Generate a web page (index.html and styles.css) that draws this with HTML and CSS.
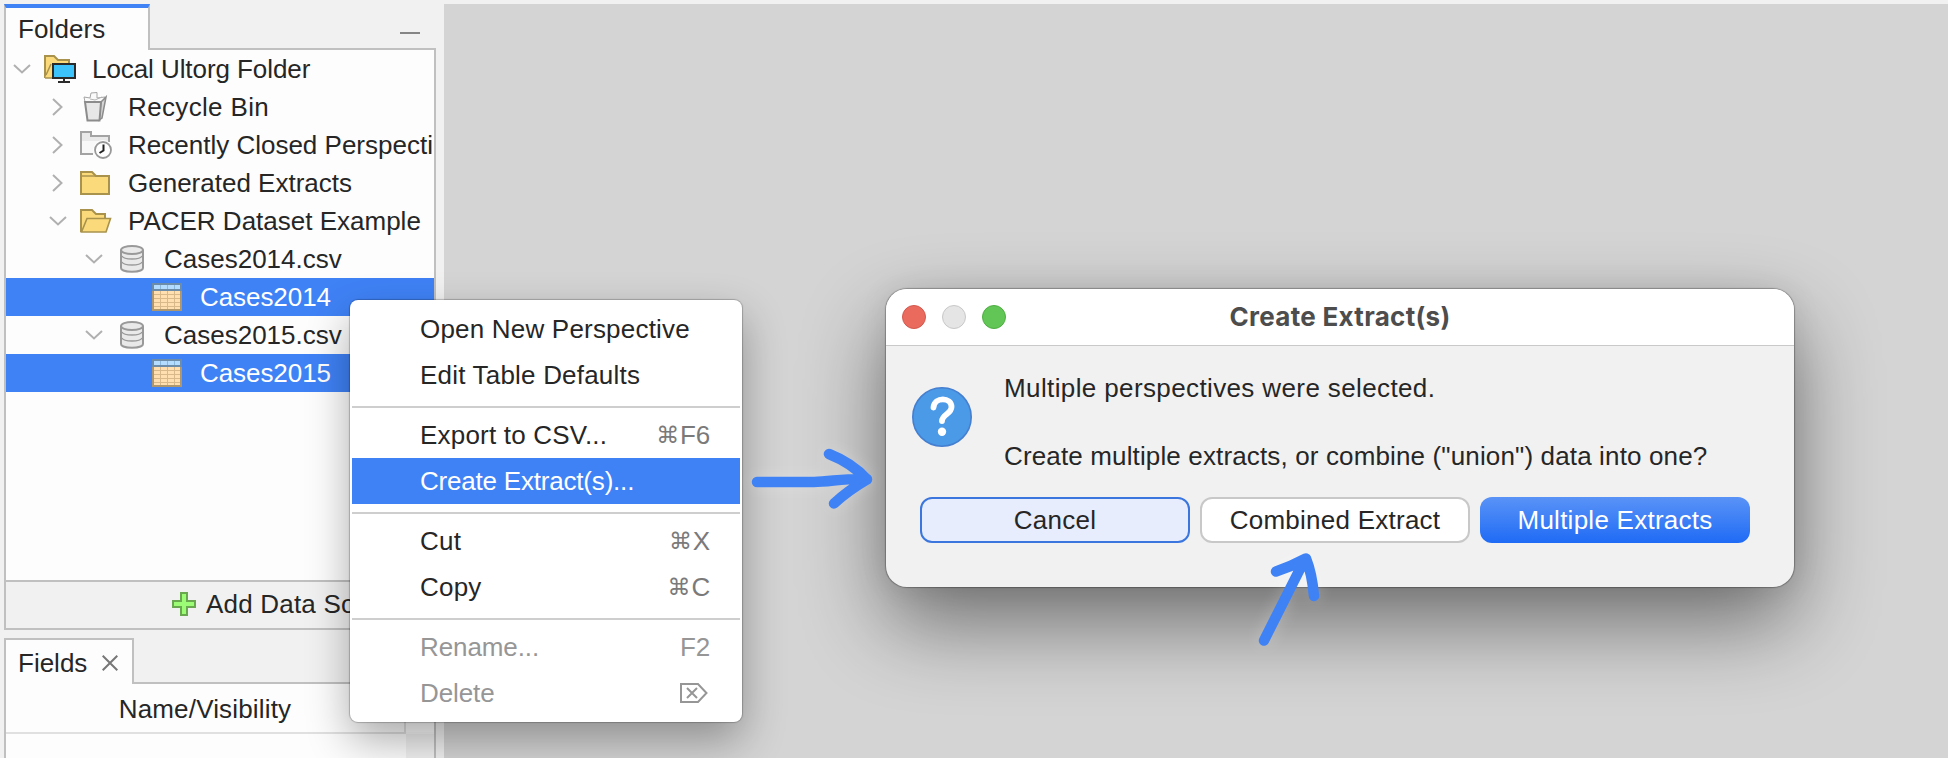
FILE: index.html
```html
<!DOCTYPE html>
<html lang="en">
<head>
<meta charset="utf-8">
<title>Create Extract(s)</title>
<link rel="stylesheet" href="styles.css">
</head>
<body>
<svg width="0" height="0" class="defs">
  <symbol id="down" viewBox="0 0 18 12"><path d="M1 2l8 7.500 8-7.500" fill="none" stroke="#b0b0b0" stroke-width="2"/></symbol>
  <symbol id="right" viewBox="0 0 12 18"><path d="M1 1l8.500 8-8.500 8" fill="none" stroke="#b0b0b0" stroke-width="2"/></symbol>
  <symbol id="db" viewBox="0 0 24 28">
    <path d="M1 5v18c0 5 22 5 22 0V5" fill="#e9e9e9" stroke="#999" stroke-width="2"/>
    <ellipse cx="12" cy="5" rx="11" ry="4" fill="#e9e9e9" stroke="#999" stroke-width="2"/>
    <path d="M2 11c2 4 18 4 20 0M2 17c2 4 18 4 20 0" fill="none" stroke="#999" stroke-width="1.300"/>
  </symbol>
  <symbol id="table" viewBox="0 0 30 28">
    <rect x="1" y="1" width="28" height="26" fill="#ffdfb0" stroke="#ae976f" stroke-width="2"/>
    <rect x="1" y="1" width="28" height="6" fill="#b3dcff" stroke="#6d8ca8" stroke-width="2"/>
    <path d="M8.500 8v18M15.500 8v18M22.500 8v18M2 11.500h26M2 15.500h26M2 19.500h26M2 23.500h26" stroke="#d9b98a" stroke-width="1" fill="none"/>
    <path d="M8.500 2v4M15.500 2v4M22.500 2v4" stroke="#8bb8de" stroke-width="1"/>
  </symbol>
</svg>
<div class="app">
  <aside class="side">
    <section class="panel folders">
      <header class="tabs">
        <div class="tab active">Folders</div>
        <div class="rest"><span class="minimize"></span></div>
      </header>
      <div class="tree">
        <div class="row l0"><svg class="tw" width="18" height="12"><use href="#down"/></svg>
          <span class="ic"><svg width="32" height="28" viewBox="0 0 32 28"><path d="M1 23V1h9l4 4h11v3" fill="#fbda7c" stroke="#a8924c" stroke-width="2"/><path d="M1 23h7V6z" fill="#fbda7c"/><path d="M1 23h7M2 20L7 9" stroke="#a8924c" stroke-width="1.500" fill="none"/><rect x="9" y="9" width="22" height="14" fill="#3cc3fb" stroke="#2b2b2b" stroke-width="2"/><path d="M14 27h12M20 24v3" stroke="#2b2b2b" stroke-width="2"/></svg></span>
          <span class="t tight">Local Ultorg Folder</span></div>
        <div class="row l1"><svg class="tw" width="12" height="18"><use href="#right"/></svg>
          <span class="ic"><svg width="32" height="30" viewBox="0 0 32 30"><path d="M5 10L4 5l6 1 1-5 6-.5v5.500l8-1v5z" fill="#fafafa" stroke="#a5a5a5"/><path d="M10 7l5 1 7-3" fill="none" stroke="#b5b5b5"/><path d="M21 10l5-5-4 21-3 2z" fill="#d5d5d5" stroke="#8c8c8c" stroke-width="1.500"/><path d="M5 10h16l-1.500 18.500h-12z" fill="#e7e7e7" stroke="#8c8c8c" stroke-width="2"/></svg></span>
          <span class="t wide">Recycle Bin</span></div>
        <div class="row l1"><svg class="tw" width="12" height="18"><use href="#right"/></svg>
          <span class="ic"><svg width="32" height="28" viewBox="0 0 32 28"><path d="M1 23V1h10v4h18v18z" fill="#f8f8f8"/><path d="M1 10V1h10v4h18v5z" fill="#e9e9e9"/><path d="M13 23H1V1h10v4h18v6" fill="none" stroke="#a3a3a3" stroke-width="2"/><circle cx="23" cy="19" r="10" fill="#fdfdfd"/><circle cx="23" cy="19" r="8" fill="#fff" stroke="#999" stroke-width="1.800"/><path d="M23.500 13.500v6l-4 2.500" fill="none" stroke="#222" stroke-width="2"/></svg></span>
          <span class="t">Recently Closed Perspecti</span></div>
        <div class="row l1"><svg class="tw" width="12" height="18"><use href="#right"/></svg>
          <span class="ic"><svg width="32" height="26" viewBox="0 0 32 26"><path d="M1 24V2h11l4 4h13v18z" fill="#fbda7c" stroke="#a8924c" stroke-width="2"/><path d="M2 6h14" stroke="#a8924c" stroke-width="1.500"/></svg></span>
          <span class="t">Generated Extracts</span></div>
        <div class="row l1"><svg class="tw" width="18" height="12"><use href="#down"/></svg>
          <span class="ic"><svg width="32" height="26" viewBox="0 0 32 26"><path d="M1 24V2h11l4 4h9v5" fill="#fbda7c" stroke="#a8924c" stroke-width="2"/><path d="M1.500 24L7 10.500h23.500l-4.500 13.500z" fill="#fbda7c" stroke="#a8924c" stroke-width="1.600"/></svg></span>
          <span class="t">PACER Dataset Example</span></div>
        <div class="row l2"><svg class="tw" width="18" height="12"><use href="#down"/></svg>
          <span class="ic"><svg width="24" height="28"><use href="#db"/></svg></span>
          <span class="t">Cases2014.csv</span></div>
        <div class="row l3 sel"><span class="ic"><svg width="30" height="28"><use href="#table"/></svg></span>
          <span class="t tight">Cases2014</span></div>
        <div class="row l2"><svg class="tw" width="18" height="12"><use href="#down"/></svg>
          <span class="ic"><svg width="24" height="28"><use href="#db"/></svg></span>
          <span class="t">Cases2015.csv</span></div>
        <div class="row l3 sel"><span class="ic"><svg width="30" height="28"><use href="#table"/></svg></span>
          <span class="t tight">Cases2015</span></div>
      </div>
      <div class="add"><svg width="24" height="24" viewBox="0 0 24 24"><path d="M9 1h6v8h8v6h-8v8H9v-8H1V9h8z" fill="#9dfc76" stroke="#6aa84f" stroke-width="2"/></svg><span>Add Data Source</span></div>
    </section>
    <section class="panel fields">
      <header class="tabs">
        <div class="tab">Fields<svg width="16" height="16" viewBox="0 0 16 16"><path d="M.7.7l14.600 14.600M15.300.7L.7 15.300" stroke="#777" stroke-width="2"/></svg></div>
        <div class="rest"></div>
      </header>
      <div class="grid"><div class="col">Name/Visibility</div><div class="corner"></div><div class="cells"></div><div class="gutter"></div></div>
    </section>
  </aside>
  <main class="desk"></main>
</div>

<div class="menu">
  <div class="item">Open New Perspective</div>
  <div class="item">Edit Table Defaults</div>
  <hr>
  <div class="item">Export to CSV...<kbd><i>⌘</i>F6</kbd></div>
  <div class="item on">Create Extract(s)...</div>
  <hr>
  <div class="item">Cut<kbd><i>⌘</i>X</kbd></div>
  <div class="item">Copy<kbd><i>⌘</i>C</kbd></div>
  <hr>
  <div class="item off">Rename...<kbd>F2</kbd></div>
  <div class="item off">Delete<kbd><svg class="del" width="28" height="20" viewBox="0 0 28 20"><path d="M1 1h17l8.500 9-8.500 9H1zM7 5l10 10M17 5L7 15" fill="none" stroke="#969696" stroke-width="2"/></svg></kbd></div>
</div>

<div class="dialog">
  <div class="title"><span class="lights"><b class="red"></b><b class="grey"></b><b class="green"></b></span>Create Extract(s)</div>
  <div class="body">
    <svg width="60" height="60" viewBox="0 0 60 60"><circle cx="30" cy="30" r="29.200" fill="#4a9ae8" stroke="#457fd0" stroke-width="1.600"/><path d="M21.500 20.500C22.500 9.500 39.500 10 39.500 20c0 7-9.500 7.500-9.500 14" fill="none" stroke="#fff" stroke-width="5.800" stroke-linecap="round"/><circle cx="30" cy="44.800" r="4.200" fill="#fff"/></svg>
    <div class="msg"><p>Multiple perspectives were selected.</p><p class="ask">Create multiple extracts, or combine ("union") data into one?</p></div>
  </div>
  <div class="buttons"><button class="cancel">Cancel</button><button>Combined Extract</button><button class="primary">Multiple Extracts</button></div>
</div>

<svg class="arrow a1" width="130" height="70" viewBox="745 440 130 70"><path d="M757 482h57C830 482 844 478 867 479M829 454q23 9 38 25.500q-19 11-33 24"/></svg>
<svg class="arrow a2" width="70" height="100" viewBox="1255 550 70 100"><path d="M1264 640.500L1305 559M1276 571.500q15-5 30-13q6 15 8 37.500"/></svg>
</body>
</html>
```
FILE: styles.css
```css
* { box-sizing: border-box; }
body {
  margin: 0; width: 1948px; height: 758px; overflow: hidden; position: relative;
  background: #f1f1f1; color: #262626;
  font: 26px/38px "Liberation Sans", Arial, sans-serif; letter-spacing: .2px;
}
svg { flex: none; display: block; }
.defs { position: absolute; }
.app { display: flex; height: 758px; padding-top: 4px; }
.side { width: 444px; padding-left: 4px; flex: none; }
.desk { flex: 1; background: #d4d4d4; }
.panel { width: 432px; display: flex; flex-direction: column; }
.folders { height: 626px; }
.fields { height: 120px; margin-top: 8px; }
.tabs { display: flex; height: 46px; flex: none; }
.tab {
  width: 146px; padding: 2px 0 0 12px; line-height: 42px; background: #fdfdfd;
  border: solid #c0c0c0; border-width: 2px 2px 0; display: flex; align-items: center;
}
.tab.active { border-top: 4px solid #3f82f6; padding-top: 0; letter-spacing: .1px; }
.fields .tab { width: 130px; gap: 15px; letter-spacing: 0; }
.rest { flex: 1; border-bottom: 2px solid #c0c0c0; display: flex; justify-content: flex-end; padding: 28px 16px 0 0; }
.minimize { width: 20px; height: 2px; background: #858585; }
.tree { height: 530px; background: #fdfdfd; border: solid #c0c0c0; border-width: 0 2px; overflow: hidden; letter-spacing: 0; }
.row { height: 38px; display: flex; align-items: center; white-space: nowrap; }
.row::before { content: ""; flex: none; }
.l0::before { width: 1px; }
.l1::before { width: 37px; }
.l2::before { width: 73px; }
.l3::before { width: 140px; }
.tw { width: 30px; margin-right: 7px; }
.ic { width: 48px; flex: none; }
.l2 .ic { padding-left: 4px; }
.l3 .ic { padding-left: 6px; width: 54px; }
.t { flex: none; }
.tight { letter-spacing: -.07px; }
.wide { letter-spacing: .35px; }
.sel { background: #3f82f6; color: #fff; }
.add {
  height: 50px; border: 2px solid #c0c0c0; display: flex; align-items: center;
  padding: 0 0 2px 166px; gap: 10px; white-space: nowrap;
}
.grid {
  flex: 1; border: solid #c0c0c0; border-width: 0 2px; background: #fdfdfd;
  display: grid; grid-template-columns: 400px 28px; grid-template-rows: 50px 1fr;
}
.col { border: solid #e0e0e0; border-width: 0 2px 2px 0; text-align: center; line-height: 50px; letter-spacing: .17px; }
.corner { border-bottom: 2px solid #f8f8f8; }
.gutter { background: #f1f1f1; }

.menu {
  position: absolute; left: 350px; top: 300px; width: 392px; height: 422px; padding: 6px 2px;
  background: #fff; border-radius: 8px;
  box-shadow: 0 0 1px 1px rgba(0,0,0,.22), 0 18px 44px rgba(0,0,0,.33);
}
.menu hr { margin: 8px 0 4px; border: 0; height: 2px; background: #cecece; }
.item { height: 46px; line-height: 46px; padding: 0 30px 0 68px; display: flex; justify-content: space-between; white-space: nowrap; }
.on { background: #3f82f6; color: #fff; letter-spacing: -.2px; }
kbd { font: inherit; color: #7a7a7a; display: flex; align-items: center; letter-spacing: -.2px; }
kbd i { font: 23px "DejaVu Sans", sans-serif; margin-right: 1px; }
.off { letter-spacing: -.1px; }
.off, .off kbd { color: #969696; }
.del { margin-right: 2px; }

.dialog {
  position: absolute; left: 886px; top: 289px; width: 908px; height: 298px; border-radius: 21px;
  background: #f1f1f1;
  box-shadow: 0 0 1px 1px rgba(0,0,0,.28), 0 36px 84px rgba(0,0,0,.48), 0 0 30px rgba(0,0,0,.08);
}
.title {
  height: 57px; border-bottom: 1px solid #c9c9c9; border-radius: 21px 21px 0 0; background: #fff;
  text-align: center; font: bold 26px/55px Inter, sans-serif; color: #4d4d4d; letter-spacing: .3px;
}
.lights { position: absolute; left: 16px; top: 16px; display: flex; gap: 16px; }
.lights b { width: 24px; height: 24px; border-radius: 50%; border: 1px solid #d3584d; background: #ea6a5e; }
.lights .grey { background: #e5e5e5; border-color: #c8c8c8; }
.lights .green { background: #61c655; border-color: #4fae42; }
.body { display: flex; padding: 23px 0 0 26px; gap: 32px; height: 151px; }
.body svg { margin-top: 18px; }
.msg p { margin: 0 0 30px; white-space: nowrap; letter-spacing: .38px; }
.msg .ask { letter-spacing: .14px; }
.buttons { display: flex; gap: 10px; padding-left: 34px; }
button {
  width: 270px; height: 46px; padding: 0 0 1px; border: 2px solid #c8c8c8; border-radius: 12px;
  background: #fff; color: #262626; font: inherit; letter-spacing: .25px;
}
.cancel { background: #e7edfd; border-color: #3b76de; }
.primary { background: linear-gradient(#5a93f7, #1f6bf5); border: 0; color: #fff; }
.arrow {
  position: absolute; fill: none; stroke: #3f82f6; stroke-width: 10.500; stroke-linecap: round; stroke-linejoin: round;
  overflow: visible; filter: drop-shadow(0 0 8px rgba(255,255,255,.25));
}
.a1 { left: 745px; top: 440px; }
.a2 { left: 1255px; top: 550px; }
```
